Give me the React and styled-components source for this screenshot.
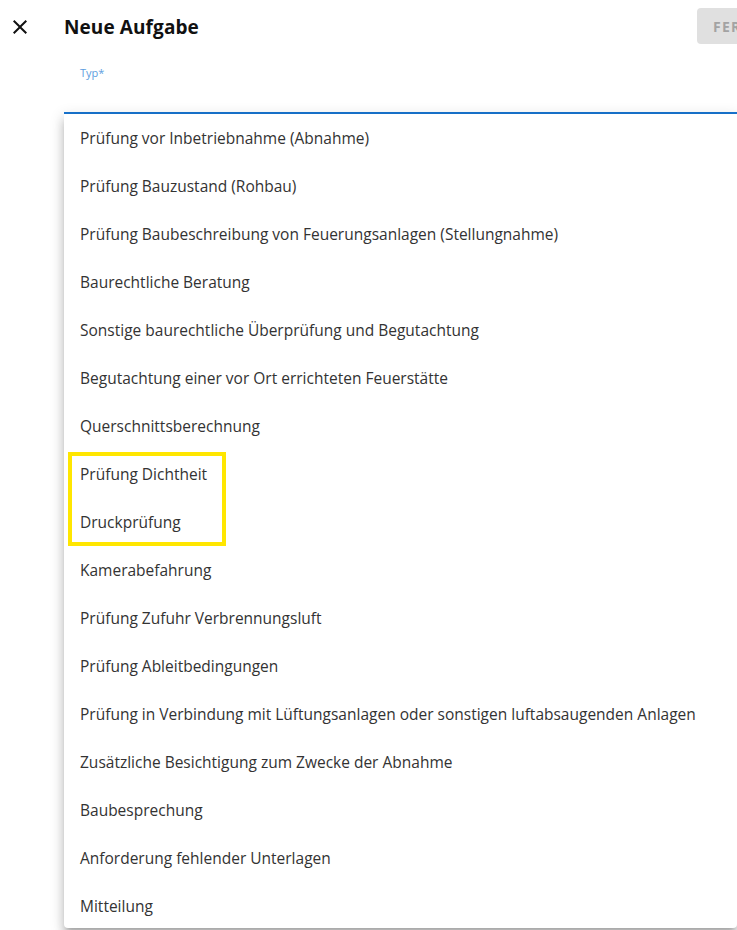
import React from "react";
import styled, { createGlobalStyle } from "styled-components";

const Global = createGlobalStyle`
  html, body { margin: 0; padding: 0; background: #fff; }
  body { font-family: "Open Sans", "Noto Sans", sans-serif; overflow: hidden; }
  * { box-sizing: border-box; }
`;

const Page = styled.div`
  position: relative;
  width: 737px;
  height: 930px;
  overflow: hidden;
  background: #fff;
`;

const Header = styled.div`
  display: flex;
  align-items: center;
  height: 52px;
  padding-top: 1px;
`;

const CloseBtn = styled.button`
  width: 40px;
  height: 40px;
  margin-right: 24px;
  border: none;
  background: none;
  padding: 0;
  display: flex;
  align-items: center;
  justify-content: center;
  color: #111;
`;

const Title = styled.h1`
  margin: 0;
  flex: 1;
  font-size: 19px;
  font-weight: 700;
  color: #111;
  letter-spacing: 0.1px;
`;

const SaveBtn = styled.button`
  height: 36px;
  min-width: 90px;
  margin-right: -50px;
  padding: 0 16px;
  border: none;
  border-radius: 4px;
  background: #e0e0e0;
  color: #a3a3a3;
  font-family: "Open Sans", sans-serif;
  font-size: 14px;
  font-weight: 700;
  letter-spacing: 1.2px;
  text-align: left;
  align-self: flex-start;
  margin-top: 7px;
`;

const Field = styled.div`
  margin-left: 64px;
  height: 62px;
  border-bottom: 2px solid #1976d2;
  padding: 8px 16px 0;
`;

const Label = styled.label`
  font-size: 11px;
  color: #5e9ee0;
`;

const Menu = styled.ul`
  margin: 0 0 0 64px;
  padding: 0;
  list-style: none;
  background: #fff;
  border-radius: 0 0 4px 4px;
  box-shadow: 0 5px 5px -3px rgba(0,0,0,0.2), 0 8px 10px 1px rgba(0,0,0,0.14), 0 3px 14px 2px rgba(0,0,0,0.12);
  height: 814px;
  overflow: hidden;
`;

const Item = styled.li`
  height: 48px;
  display: flex;
  align-items: center;
  padding: 0 16px;
  font-size: 15.5px;
  color: #333;
  white-space: nowrap;
`;

const Highlight = styled.div`
  position: absolute;
  left: 68px;
  top: 452px;
  width: 158px;
  height: 94px;
  border: 4px solid #ffe600;
  pointer-events: none;
`;

const items = [
  "Prüfung vor Inbetriebnahme (Abnahme)",
  "Prüfung Bauzustand (Rohbau)",
  "Prüfung Baubeschreibung von Feuerungsanlagen (Stellungnahme)",
  "Baurechtliche Beratung",
  "Sonstige baurechtliche Überprüfung und Begutachtung",
  "Begutachtung einer vor Ort errichteten Feuerstätte",
  "Querschnittsberechnung",
  "Prüfung Dichtheit",
  "Druckprüfung",
  "Kamerabefahrung",
  "Prüfung Zufuhr Verbrennungsluft",
  "Prüfung Ableitbedingungen",
  "Prüfung in Verbindung mit Lüftungsanlagen oder sonstigen luftabsaugenden Anlagen",
  "Zusätzliche Besichtigung zum Zwecke der Abnahme",
  "Baubesprechung",
  "Anforderung fehlender Unterlagen",
  "Mitteilung",
];

export default function App() {
  return (
    <Page>
      <Global />
      <Header>
        <CloseBtn aria-label="close">
          <svg width="24" height="24" viewBox="0 0 24 24">
            <path d="M19 6.41 17.59 5 12 10.59 6.41 5 5 6.41 10.59 12 5 17.59 6.41 19 12 13.41 17.59 19 19 17.59 13.41 12z" fill="#111" />
          </svg>
        </CloseBtn>
        <Title>Neue Aufgabe</Title>
        <SaveBtn>FERTIG</SaveBtn>
      </Header>
      <Field>
        <Label>Typ*</Label>
      </Field>
      <Menu>
        {items.map((t) => (
          <Item key={t}>{t}</Item>
        ))}
      </Menu>
      <Highlight />
    </Page>
  );
}
